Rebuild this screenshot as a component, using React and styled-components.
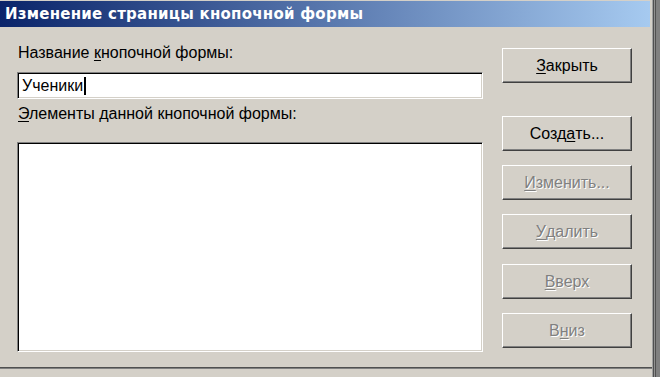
import React from 'react'
import styled, { createGlobalStyle } from 'styled-components'

const Colors = {
    face: '#d4d0c8',
    shadow: '#808080',
    dark: '#404040',
    light: '#ffffff',
    titleFrom: '#0a246a',
    titleTo: '#a6caf0',
}

const GlobalStyle = createGlobalStyle`
    html, body {
        margin: 0;
        padding: 0;
        background-color: ${Colors.face};
        font-family: 'Liberation Sans', Arial, sans-serif;
        overflow: hidden;
    }
`

const Screen = styled.div`
    display: flex;
    flex-direction: row;
    width: 660px;
    height: 377px;
    background-color: ${Colors.face};
`

const Window = styled.div`
    display: flex;
    flex-direction: column;
    width: 652px;
    height: 368px;
    padding-top: 1px;
    box-sizing: border-box;
    border-bottom: 1px solid #505050;
    box-shadow: 0 1px 0 ${Colors.shadow};
`

const TitleBar = styled.div`
    height: 26px;
    width: 650px;
    display: flex;
    align-items: center;
    padding-left: 5px;
    box-sizing: border-box;
    background: linear-gradient(to right, ${Colors.titleFrom}, ${Colors.titleTo});
    color: ${Colors.light};
    font-family: 'DejaVu Sans', Verdana, sans-serif;
    font-weight: bold;
    font-size: 15px;
    letter-spacing: 0.25px;
    white-space: nowrap;
`

const Body = styled.div`
    flex: 1;
    display: flex;
    flex-direction: row;
    padding: 17px 0 0 17px;
    gap: 19px;
`

const LeftColumn = styled.div`
    display: flex;
    flex-direction: column;
    width: 466px;
`

const RightColumn = styled.div`
    display: flex;
    flex-direction: column;
    padding-top: 4px;
`

const Label = styled.div`
    font-size: 16px;
    line-height: 18px;
    color: #000;
    margin-left: 1px;
    margin-bottom: ${p => p.$gap}px;
`

const Mn = styled.span`
    text-decoration: underline;
    text-underline-offset: 2px;
`

const Sunken = styled.div`
    box-sizing: border-box;
    border: 1px solid;
    border-color: ${Colors.shadow} ${Colors.light} ${Colors.light} ${Colors.shadow};
    box-shadow: inset 1px 1px 0 #000, inset -1px -1px 0 ${Colors.face};
    background-color: ${Colors.light};
`

const TextField = styled(Sunken)`
    height: 27px;
    display: flex;
    align-items: center;
    padding-left: 4px;
    margin-bottom: 6px;
    font-size: 16px;
    color: #000;
`

const Caret = styled.span`
    display: inline-block;
    width: 2px;
    height: 18px;
    background-color: #000;
    margin-left: 1px;
`

const ListBox = styled(Sunken)`
    height: 210px;
`

const Button = styled.div`
    box-sizing: border-box;
    width: 130px;
    height: 35px;
    margin-top: ${p => p.$top}px;
    display: flex;
    align-items: center;
    justify-content: center;
    border: 1px solid;
    border-color: ${Colors.light} ${Colors.dark} ${Colors.dark} ${Colors.light};
    box-shadow: inset -1px -1px 0 ${Colors.shadow};
    background-color: ${Colors.face};
    font-size: 16px;
    color: ${p => (p.$disabled ? Colors.shadow : '#000')};
    text-shadow: ${p => (p.$disabled ? `1px 1px 0 ${Colors.light}` : 'none')};
    user-select: none;
`

const RightStrip = styled.div`
    width: 8px;
    height: 377px;
    background: linear-gradient(
        to right,
        #a0a0a0 0 1px,
        #505050 1px 2px,
        #909090 2px 3px,
        #505050 3px 4px,
        #808080 4px 8px
    );
`

const buttons = [
    { top: 0, label: <><Mn>З</Mn>акрыть</> },
    { top: 33, label: <>Созд<Mn>а</Mn>ть...</> },
    { top: 14, label: <><Mn>И</Mn>зменить...</>, disabled: true },
    { top: 14, label: <><Mn>У</Mn>далить</>, disabled: true },
    { top: 15, label: <><Mn>В</Mn>верх</>, disabled: true },
    { top: 14, label: <>В<Mn>н</Mn>из</>, disabled: true },
]

const App = () => {
    return (
        <Screen>
            <GlobalStyle />
            <Window>
                <TitleBar>Изменение страницы кнопочной формы</TitleBar>
                <Body>
                    <LeftColumn>
                        <Label $gap={10}>Название <Mn>к</Mn>нопочной формы:</Label>
                        <TextField>
                            Ученики<Caret />
                        </TextField>
                        <Label $gap={19}><Mn>Э</Mn>лементы данной кнопочной формы:</Label>
                        <ListBox />
                    </LeftColumn>
                    <RightColumn>
                        {buttons.map((b, i) => (
                            <Button key={i} $top={b.top} $disabled={b.disabled}>
                                {b.label}
                            </Button>
                        ))}
                    </RightColumn>
                </Body>
            </Window>
            <RightStrip />
        </Screen>
    )
}

export default App
